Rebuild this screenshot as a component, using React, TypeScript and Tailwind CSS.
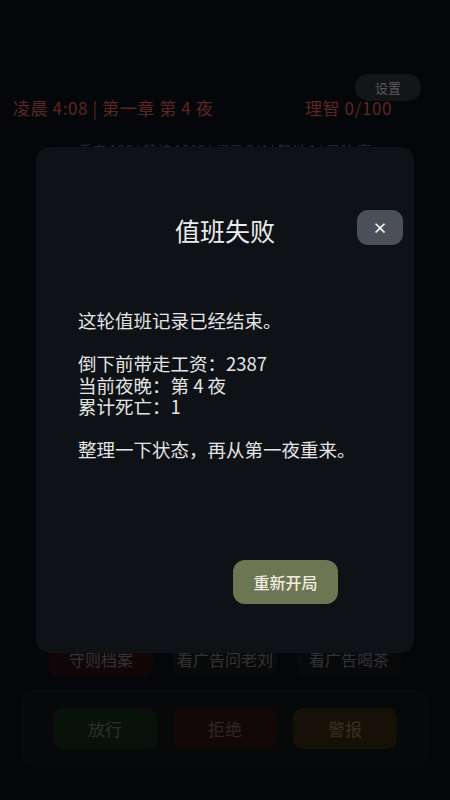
import React from "react";

const font = { fontFamily: '"Noto Sans CJK SC", "Noto Sans", sans-serif' };

const summary = [
  "这轮值班记录已经结束。",
  "",
  "倒下前带走工资：2387",
  "当前夜晚：第 4 夜",
  "累计死亡：1",
  "",
  "整理一下状态，再从第一夜重来。",
];

const tools = [
  { label: "守则档案", cls: "bg-[#120708]" },
  { label: "看广告问老刘", cls: "bg-[#090b0a]" },
  { label: "看广告喝茶", cls: "bg-[#08090a]" },
];

const actions = [
  { label: "放行", cls: "bg-[#09110b] text-[#283229]" },
  { label: "拒绝", cls: "bg-[#130808] text-[#342626]" },
  { label: "警报", cls: "bg-[#161107] text-[#38301f]" },
];

const App = () => {
  return (
    <div className="relative h-[800px] w-full overflow-hidden bg-[#050609]" style={font}>
      {/* dimmed game screen */}
      <div className="flex h-full flex-col pt-[74px] pb-[33px]">
        <div className="flex justify-end pr-[29px]">
          <button className="h-[27px] w-[66px] rounded-full bg-[#131517] text-[13px] text-[#5a5b5d]">
            设置
          </button>
        </div>
        <div className="-mt-[3px] flex h-[20px] items-center justify-between pl-[13px] pr-[58px] text-[17px] leading-[20px] tracking-[0.6px] text-[#5c2624]">
          <span>凌晨 4:08 | 第一章 第 4 夜</span>
          <span>理智 0/100</span>
        </div>
        <div className="mt-[24px] h-[16px] text-center text-[14px] leading-[16px] text-[#25282c]">
          手电 100 | 精神 1000 | 记录 3/4 | 警觉 1 | 风险 高
        </div>
        <div className="mx-[22px] flex-1" />
        <div className="flex h-[37px] justify-center gap-[20px]">
          {tools.map((t) => (
            <div
              key={t.label}
              className={`flex w-[104px] items-center justify-center rounded-b-[10px] text-[16px] text-[#333335] ${t.cls}`}
            >
              {t.label}
            </div>
          ))}
        </div>
        <div className="mx-[22px] mt-[13px] flex h-[77px] items-center justify-center gap-[16px] rounded-[12px] border border-[#0b0c0e] bg-[#070809]">
          {actions.map((a) => (
            <div
              key={a.label}
              className={`flex h-[41px] w-[104px] items-center justify-center rounded-[10px] text-[17px] ${a.cls}`}
            >
              {a.label}
            </div>
          ))}
        </div>
      </div>

      {/* result dialog */}
      <div className="fixed inset-0 flex items-center justify-center">
        <div className="flex h-[506px] w-[378px] flex-col rounded-[14px] bg-[#0e1216]">
          <div className="mt-[63px] grid h-[35px] grid-cols-[46px_1fr_46px] items-center px-[11px]">
            <div />
            <div className="mt-[5px] text-center text-[25px] leading-[30px] text-[#ececec]">值班失败</div>
            <button className="flex h-[35px] w-[46px] items-center justify-center rounded-[11px] bg-[#4b5058] text-[15px] font-bold leading-none text-[#f2f2f2]">
              ×
            </button>
          </div>
          <div className="mt-[65px] pl-[42px] text-[18.5px] leading-[21.5px] text-[#e4e4e4]">
            {summary.map((line, i) => (
              <div key={i} className="h-[21.5px] whitespace-pre">
                {line}
              </div>
            ))}
          </div>
          <div className="flex-1" />
          <div className="mb-[49px] flex justify-end pr-[76px]">
            <button className="h-[44px] w-[105px] rounded-[12px] bg-[#6c7653] text-[16px] font-medium text-[#efece2]">
              重新开局
            </button>
          </div>
        </div>
      </div>
    </div>
  );
};

export default App;
